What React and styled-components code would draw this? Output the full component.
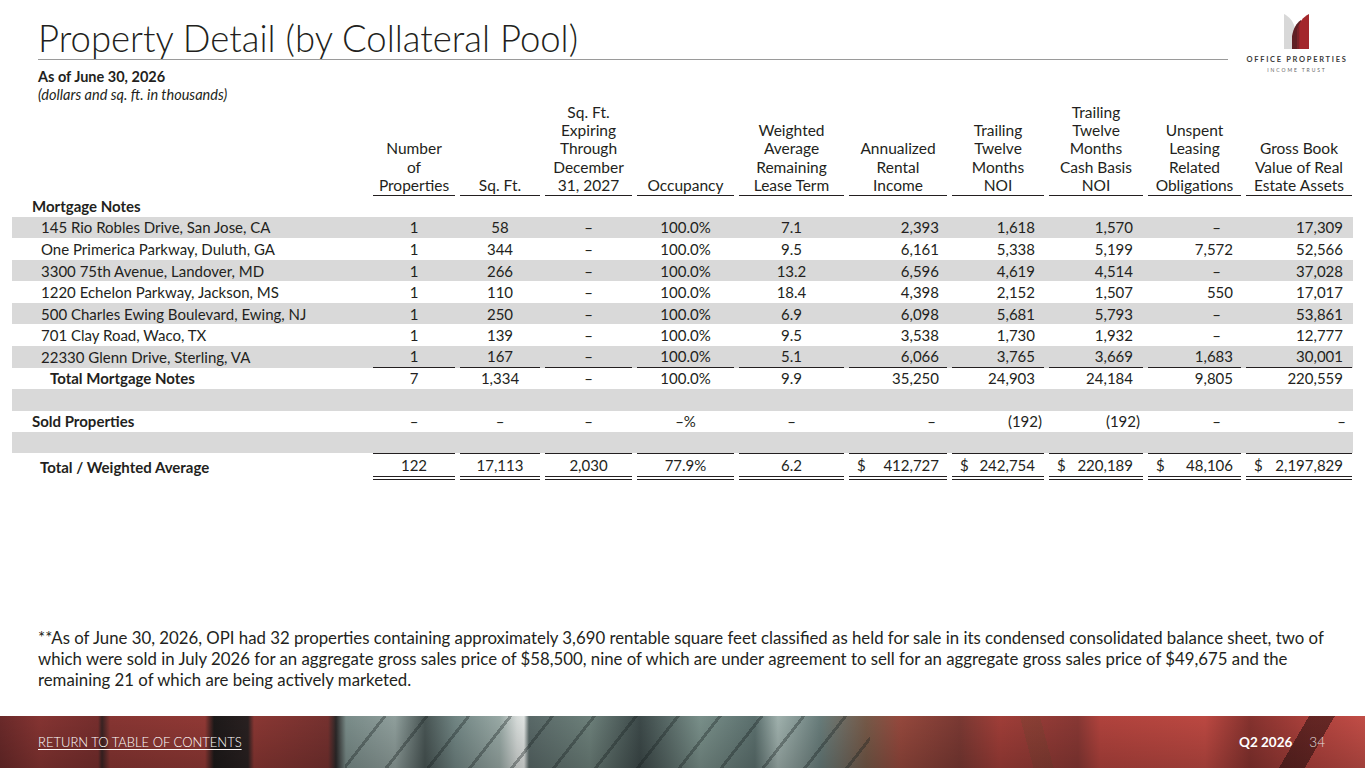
import React from 'react';
import styled, { createGlobalStyle } from 'styled-components';

const Global = createGlobalStyle`
  html, body { margin: 0; padding: 0; background: #fff; }
  body { font-family: Lato, "Open Sans", "Liberation Sans", sans-serif; color: #231f20; }
  * { box-sizing: border-box; }
`;

const INK = '#231f20';
const SHADE = '#d9d9d9';
const COLS = '356px 82px 80px 87px 97px 105px 98px 92px 94px 93px 106px';

const Page = styled.div`
  width: 1365px;
  height: 768px;
  display: flex;
  flex-direction: column;
  overflow: hidden;
`;

const Header = styled.header`
  display: flex;
  align-items: flex-start;
  height: 61px;
  padding: 0 13px 0 38px;
`;

const TitleBlock = styled.div`
  flex: 1;
  padding-top: 17px;
  border-bottom: 1px solid #9a9a9a;
  margin-right: 14px;
`;

const Title = styled.h1`
  margin: 0;
  font-weight: 300;
  font-size: 36.5px;
  line-height: 42px;
  color: ${INK};
  white-space: nowrap;
`;

const Brand = styled.div`
  width: 110px;
  padding-top: 14px;
  display: flex;
  flex-direction: column;
  align-items: center;
`;

const LogoSvg = styled.svg`
  display: block;
`;

const BrandName = styled.div`
  margin-top: 7px;
  font-size: 7.5px;
  line-height: 8px;
  font-weight: 700;
  letter-spacing: 1.7px;
  color: #3a3a3a;
  white-space: nowrap;
`;

const BrandSub = styled.div`
  margin-top: 3px;
  font-size: 5px;
  line-height: 6px;
  letter-spacing: 1.9px;
  color: #666;
  white-space: nowrap;
`;

const Sub = styled.div`
  padding-left: 38px;
  margin-top: 7px;
  font-size: 14.5px;
  line-height: 17.5px;
`;

const SubBold = styled.div`
  font-weight: 700;
`;

const SubItalic = styled.div`
  font-style: italic;
`;

const Table = styled.div`
  margin-left: 12px;
  width: 1341px;
  display: flex;
  flex-direction: column;
`;

const HeadRow = styled.div`
  display: grid;
  grid-template-columns: ${COLS};
  column-gap: 5px;
  align-items: end;
`;

const HeadCell = styled.div`
  text-align: center;
  font-size: 15.5px;
  line-height: 18.2px;
  padding-bottom: 1px;
  border-bottom: ${p => (p.$blank ? 'none' : `1.5px solid ${INK}`)};
  white-space: nowrap;
`;

const Row = styled.div`
  display: grid;
  grid-template-columns: ${COLS};
  column-gap: 5px;
  height: ${p => p.$h}px;
  background: ${p => (p.$shade ? SHADE : 'transparent')};
  font-size: 15px;
`;

const Label = styled.div`
  display: flex;
  align-items: center;
  padding-left: ${p => p.$indent}px;
  font-weight: ${p => (p.$bold ? 700 : 400)};
  white-space: nowrap;
`;

const Cell = styled.div`
  display: flex;
  align-items: center;
  justify-content: ${p => (p.$align === 'center' ? 'center' : p.$money ? 'space-between' : 'flex-end')};
  padding-right: ${p => p.$pr}px;
  padding-left: ${p => (p.$money ? 8 : 0)}px;
  border-top: ${p => (p.$top ? `1.5px solid ${INK}` : 'none')};
  border-bottom: ${p =>
    p.$bottom === 'double' ? `4px double ${INK}` : p.$bottom ? `1.5px solid ${INK}` : 'none'};
  white-space: nowrap;
`;

const Footnote = styled.p`
  margin: auto 0 26px;
  padding-left: 38px;
  font-size: 16.8px;
  line-height: 21px;
  white-space: nowrap;
`;

const Footer = styled.footer`
  height: 52px;
  flex-shrink: 0;
  display: flex;
  align-items: center;
  justify-content: space-between;
  padding: 0 40px 0 38px;
  background:
    linear-gradient(180deg, rgba(0,0,0,0.04), rgba(0,0,0,0.2)),
    repeating-linear-gradient(128deg, transparent 0 30px, rgba(25,35,35,0.35) 30px 33px) 345px 0 / 525px 52px no-repeat,
    linear-gradient(120deg, transparent 0 60%, rgba(40,15,15,0.55) 60% 72%, transparent 72%) 1180px 0 / 185px 52px no-repeat,
    linear-gradient(75deg, transparent 0 40%, rgba(120,70,50,0.35) 40% 55%, transparent 55%) 980px 0 / 120px 52px no-repeat,
    linear-gradient(90deg,
      #6e2b2b 0px, #8a3634 40px, #7b302f 98px, #3b2424 102px, #8c3734 110px,
      #963b37 205px, #1e1a1a 214px, #2b2222 248px, #8f3935 254px, #7a3331 328px,
      #2d2a2a 336px, #7e918e 346px, #95a5a2 395px, #4b5857 425px, #758a88 455px,
      #9fb0ac 500px, #dfe4e2 517px, #e9edeb 524px, #5c6c6b 529px, #71857f 590px,
      #3f4c4c 640px, #7e958f 700px, #5f7472 755px, #a6b8b4 778px, #6c817f 820px,
      #7a5d4b 866px, #9b4b3f 900px, #7f3b35 960px, #a6403a 1000px, #8d3a36 1078px,
      #b7453f 1100px, #c34b44 1205px, #8a3430 1250px, #b5443f 1312px, #c95049 1365px);
  color: #fff;
`;

const FootLink = styled.a`
  color: #fff;
  font-size: 13px;
  font-weight: 300;
  text-decoration: underline;
  text-underline-offset: 2px;
`;

const PageInfo = styled.div`
  display: flex;
  align-items: center;
  gap: 17px;
  font-size: 13.5px;
`;

const Quarter = styled.span`
  font-weight: 700;
  color: #fff;
`;

const PageNo = styled.span`
  font-weight: 300;
  color: #e4dede;
`;

const Logo = () => (
  <LogoSvg width="26" height="35" viewBox="0 0 26 35">
    <path d="M0 0 C4 2 9 6 11 14 L11 35 L0 35 Z" fill="#d8d8d8" />
    <path d="M8 35 L8 22 C9.5 14 12.5 9 17 6 L17 35 Z" fill="#5f2025" />
    <path d="M13 35 L13 17 C15 8 19 3 25 0 L25 35 Z" fill="#a3272c" />
    <path d="M13 35 L13 17 C13.6 14.5 14.4 12.5 15.3 10.8 L15.3 35 Z" fill="#7a2329" />
  </LogoSvg>
);

const COLDEF = [
  { align: 'center' },
  { align: 'center' },
  { align: 'center' },
  { align: 'center' },
  { align: 'center' },
  { align: 'right', pr: 8, dashPr: 11 },
  { align: 'right', pr: 9, dashPr: 11 },
  { align: 'right', pr: 10, dashPr: 12 },
  { align: 'right', pr: 8, dashPr: 20 },
  { align: 'right', pr: 9, dashPr: 6 },
];

const HEADERS = [
  ['Number', 'of', 'Properties'],
  ['Sq. Ft.'],
  ['Sq. Ft.', 'Expiring', 'Through', 'December', '31, 2027'],
  ['Occupancy'],
  ['Weighted', 'Average', 'Remaining', 'Lease Term'],
  ['Annualized', 'Rental', 'Income'],
  ['Trailing', 'Twelve', 'Months', 'NOI'],
  ['Trailing', 'Twelve', 'Months', 'Cash Basis', 'NOI'],
  ['Unspent', 'Leasing', 'Related', 'Obligations'],
  ['Gross Book', 'Value of Real', 'Estate Assets'],
];

const PROPS = [
  ['145 Rio Robles Drive, San Jose, CA', '1', '58', '–', '100.0%', '7.1', '2,393', '1,618', '1,570', '–', '17,309'],
  ['One Primerica Parkway, Duluth, GA', '1', '344', '–', '100.0%', '9.5', '6,161', '5,338', '5,199', '7,572', '52,566'],
  ['3300 75th Avenue, Landover, MD', '1', '266', '–', '100.0%', '13.2', '6,596', '4,619', '4,514', '–', '37,028'],
  ['1220 Echelon Parkway, Jackson, MS', '1', '110', '–', '100.0%', '18.4', '4,398', '2,152', '1,507', '550', '17,017'],
  ['500 Charles Ewing Boulevard, Ewing, NJ', '1', '250', '–', '100.0%', '6.9', '6,098', '5,681', '5,793', '–', '53,861'],
  ['701 Clay Road, Waco, TX', '1', '139', '–', '100.0%', '9.5', '3,538', '1,730', '1,932', '–', '12,777'],
  ['22330 Glenn Drive, Sterling, VA', '1', '167', '–', '100.0%', '5.1', '6,066', '3,765', '3,669', '1,683', '30,001'],
];

const TOTAL_MN = ['Total Mortgage Notes', '7', '1,334', '–', '100.0%', '9.9', '35,250', '24,903', '24,184', '9,805', '220,559'];
const SOLD = ['Sold Properties', '–', '–', '–', '–%', '–', '–', '(192)', '(192)', '–', '–'];
const TOTAL = ['Total / Weighted Average', '122', '17,113', '2,030', '77.9%', '6.2', '412,727', '242,754', '220,189', '48,106', '2,197,829'];

const RH = 21.55;

function cellPad(def, v) {
  if (def.align === 'center') return 0;
  if (v === '–') return def.dashPr;
  if (v.startsWith('(')) return def.pr - 7;
  return def.pr;
}

const DataRow = ({ values, shade, indent, bold, bottom, top, money, h = RH }) => (
  <Row $shade={shade} $h={h}>
    <Label $indent={indent} $bold={bold}>{values[0]}</Label>
    {values.slice(1).map((v, i) => {
      const def = COLDEF[i];
      const isMoney = money && def.align === 'right';
      return (
        <Cell
          key={i}
          $align={def.align}
          $pr={cellPad(def, v)}
          $money={isMoney}
          $top={top}
          $bottom={bottom}
        >
          {isMoney && <span>$</span>}
          <span>{v}</span>
        </Cell>
      );
    })}
  </Row>
);

const EmptyRow = ({ shade, h = RH }) => <Row $shade={shade} $h={h} />;

export default function App() {
  return (
    <Page>
      <Global />
      <Header>
        <TitleBlock>
          <Title>Property Detail (by Collateral Pool)</Title>
        </TitleBlock>
        <Brand>
          <Logo />
          <BrandName>OFFICE PROPERTIES</BrandName>
          <BrandSub>INCOME TRUST</BrandSub>
        </Brand>
      </Header>

      <Sub>
        <SubBold>As of June 30, 2026</SubBold>
        <SubItalic>(dollars and sq. ft. in thousands)</SubItalic>
      </Sub>

      <Table>
        <HeadRow>
          <HeadCell $blank />
          {HEADERS.map((lines, i) => (
            <HeadCell key={i}>
              {lines.map((l, j) => (
                <div key={j}>{l}</div>
              ))}
            </HeadCell>
          ))}
        </HeadRow>

        <Row $h={20.7}>
          <Label $indent={20} $bold>Mortgage Notes</Label>
        </Row>

        {PROPS.map((r, i) => (
          <DataRow
            key={i}
            values={r}
            shade={i % 2 === 0}
            indent={29}
            bottom={i === PROPS.length - 1}
          />
        ))}

        <DataRow values={TOTAL_MN} indent={38} bold />
        <EmptyRow shade />
        <DataRow values={SOLD} indent={20} bold />
        <EmptyRow shade h={21} />
        <DataRow values={TOTAL} indent={28} bold top bottom="double" money h={27} />
      </Table>

      <Footnote>
        **As of June 30, 2026, OPI had 32 properties containing approximately 3,690 rentable square feet classified as held for sale in its condensed consolidated balance sheet, two of
        <br />
        which were sold in July 2026 for an aggregate gross sales price of $58,500, nine of which are under agreement to sell for an aggregate gross sales price of $49,675 and the
        <br />
        remaining 21 of which are being actively marketed.
      </Footnote>

      <Footer>
        <FootLink href="#">RETURN TO TABLE OF CONTENTS</FootLink>
        <PageInfo>
          <Quarter>Q2 2026</Quarter>
          <PageNo>34</PageNo>
        </PageInfo>
      </Footer>
    </Page>
  );
}
